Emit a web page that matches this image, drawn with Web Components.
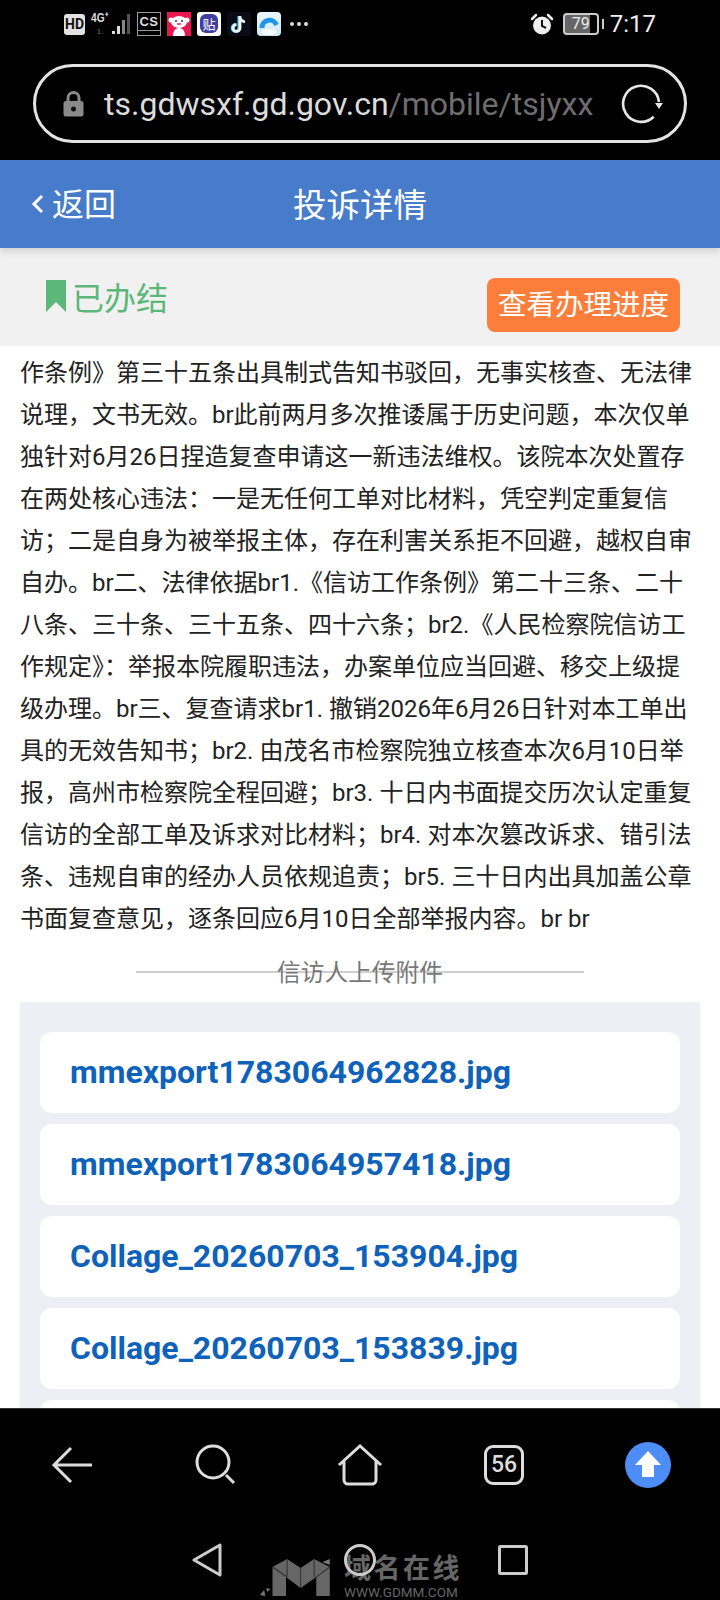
<!DOCTYPE html>
<html lang="zh-CN">
<head>
<meta charset="utf-8">
<title>投诉详情</title>
<style>
    html,body{margin:0;padding:0;background:#000;}
    body{font-family:Roboto,"Noto Sans CJK SC",sans-serif;}
    phone-shell{height:1600px;width:720px;}
</style>
</head>
<body>
<phone-shell>
    <status-bar></status-bar>
    <url-bar></url-bar>
    <app-header></app-header>
    <case-status></case-status>
    <page-scroll>
        <complaint-text>作条例》第三十五条出具制式告知书驳回，无事实核查、无法律说理，文书无效。br此前两月多次推诿属于历史问题，本次仅单独针对6月26日捏造复查申请这一新违法维权。该院本次处置存在两处核心违法：一是无任何工单对比材料，凭空判定重复信访；二是自身为被举报主体，存在利害关系拒不回避，越权自审自办。br二、法律依据br1.《信访工作条例》第二十三条、二十八条、三十条、三十五条、四十六条；br2.《人民检察院信访工作规定》：举报本院履职违法，办案单位应当回避、移交上级提级办理。br三、复查请求br1. 撤销2026年6月26日针对本工单出具的无效告知书；br2. 由茂名市检察院独立核查本次6月10日举报，高州市检察院全程回避；br3. 十日内书面提交历次认定重复信访的全部工单及诉求对比材料；br4. 对本次篡改诉求、错引法条、违规自审的经办人员依规追责；br5. 三十日内出具加盖公章书面复查意见，逐条回应6月10日全部举报内容。br br</complaint-text>
        <attach-divider>信访人上传附件</attach-divider>
        <attach-list>
            <file-card>mmexport1783064962828.jpg</file-card>
            <file-card>mmexport1783064957418.jpg</file-card>
            <file-card>Collage_20260703_153904.jpg</file-card>
            <file-card>Collage_20260703_153839.jpg</file-card>
            <file-card></file-card>
        </attach-list>
    </page-scroll>
    <browser-nav></browser-nav>
    <system-nav></system-nav>
</phone-shell>

<script>
// base: each element only gives getStyles() and getMarkup()
class ShadowBase extends HTMLElement{
    constructor(){
        super();
        this.attachShadow({mode:"open"});
    }
    getTemplate(){
        const template = document.createElement('template');
        template.innerHTML=`<style>${this.getStyles()}</style>${this.getMarkup()}`;
        return template;
    }
    getMarkup(){ return '<slot></slot>'; }
    connectedCallback(){
        this.shadowRoot.appendChild(this.getTemplate().content.cloneNode(true));
    }
}

class PhoneShell extends ShadowBase{
    getStyles(){ return `
        :host{display:flex;flex-direction:column;position:relative;overflow:hidden;background:#000;}
    `; }
}

class StatusBar extends ShadowBase{
    getStyles(){ return `
        :host{display:flex;align-items:center;height:48px;flex:none;box-sizing:border-box;padding:0 64px 0 64px;color:#e8e8e8;font-family:Roboto,sans-serif;}
        .hd{width:21px;height:21px;border-radius:3px;background:#e2e2e2;color:#111;font:700 14px/21px Roboto,sans-serif;text-align:center;}
        .sig{position:relative;width:40px;height:24px;margin-left:6px;}
        .sig b{position:absolute;left:0;top:-1px;font:700 13px/14px "Liberation Sans",sans-serif;color:#ddd;transform:scaleX(.78);transform-origin:left;}
        .sig i{position:absolute;left:6px;top:15px;font:700 7px/9px "Liberation Sans",sans-serif;color:#555;font-style:normal;}
        .sig svg{position:absolute;left:0;top:0;}
        .cs{width:22px;height:22px;margin-left:6px;border:1px solid #9a9a9a;font:700 13px/17px "Liberation Sans",sans-serif;letter-spacing:.5px;text-align:center;color:#ddd;position:relative;}
        .cs::after{content:"";position:absolute;left:0;right:0;top:17px;border-top:1px solid #9a9a9a;}
        .app{width:24px;height:24px;margin-left:6px;display:block;}
        .tie{position:relative;background:#fff;border-radius:3px;}
        .tie span{position:absolute;left:3px;top:2px;width:18px;height:19px;border-radius:6px;background:#3f3fa6;color:#fff;font:400 13px/19px "Noto Sans CJK SC",sans-serif;text-align:center;}
        .dots{margin-left:9px;display:flex;gap:3px;}
        .dots i{width:4px;height:4px;border-radius:50%;background:#ddd;}
        .right{margin-left:auto;display:flex;align-items:center;}
        .batt{position:relative;width:32px;height:18px;margin-left:9px;border:2px solid #ccc;border-radius:4px;background:linear-gradient(90deg,#666 0 78%,transparent 78%);font:400 16px/18px Roboto,sans-serif;text-align:center;color:#eee;}
        .batt::after{content:"";position:absolute;right:-7px;top:4px;width:2px;height:10px;background:#ccc;}
        .time{margin-left:11px;font:400 24px/30px Roboto,sans-serif;color:#eee;}
    `; }
    getMarkup(){ return `
        <div class="hd">HD</div>
        <div class="sig">
            <b>4G⁺</b><i>1↓</i>
            <svg width="40" height="24" fill="#ddd"><rect x="21" y="19" width="3" height="3"/><rect x="26" y="14" width="3" height="8"/><rect x="31" y="8" width="3" height="14" fill="#888"/><rect x="36" y="2" width="3" height="20" fill="#555"/></svg>
        </div>
        <div class="cs">CS</div>
        <svg class="app" viewBox="0 0 24 24"><rect width="24" height="24" fill="#e8174f"/><ellipse cx="12" cy="10" rx="8" ry="6" fill="#fff"/><circle cx="4" cy="8" r="2.5" fill="#fff"/><circle cx="20" cy="8" r="2.5" fill="#fff"/><path d="M6 24c0-6 3-8 6-8s6 2 6 8z" fill="#fff"/><circle cx="9" cy="9" r="1" fill="#333"/><circle cx="15" cy="9" r="1" fill="#333"/><path d="M10 12h4" stroke="#e8174f" stroke-width="1.4"/></svg>
        <div class="app tie"><span>贴</span></div>
        <svg class="app" viewBox="0 0 24 24"><rect width="24" height="24" rx="3" fill="#0b0b17"/><path d="M13 4v12a3.4 3.4 0 1 1-3.4-3.4" fill="none" stroke="#3fe0e6" stroke-width="3" transform="translate(-1 0)"/><path d="M13 4v12a3.4 3.4 0 1 1-3.4-3.4M13 5c.5 3 2.500 4.500 5 5" fill="none" stroke="#f2f2f2" stroke-width="2.800"/></svg>
        <svg class="app" viewBox="0 0 24 24"><defs><linearGradient id="g" x1="0" y1="0" x2="0" y2="1"><stop offset="0" stop-color="#eaf6ff"/><stop offset="1" stop-color="#cfe6f5"/></linearGradient></defs><rect width="24" height="24" rx="4" fill="url(#g)"/><path d="M5 16a7.500 7.500 0 0 1 14.500-3" fill="none" stroke="#1c96ea" stroke-width="5"/><ellipse cx="12" cy="20" rx="8" ry="3" fill="#fff" opacity=".8"/></svg>
        <div class="dots"><i></i><i></i><i></i></div>
        <div class="right">
            <svg width="24" height="24" viewBox="0 0 24 24"><circle cx="12" cy="13.500" r="9" fill="#eee"/><path d="M12 8v6l4 2" fill="none" stroke="#111" stroke-width="2"/><path d="M2 7l4-4M22 7l-4-4" stroke="#eee" stroke-width="2.500" stroke-linecap="round"/></svg>
            <div class="batt">79</div>
            <div class="time">7:17</div>
        </div>
    `; }
}

class UrlBar extends ShadowBase{
    getStyles(){ return `
        :host{display:block;flex:none;padding:16px 33px 17px;}
        .pill{height:73px;border:3px solid #e3e3e3;border-radius:40px;display:flex;align-items:center;padding:0 20px 0 27px;}
        svg.lock{flex:none;}
        .addr{margin-left:20px;font:400 32px/40px Roboto,sans-serif;color:#dcdcdc;white-space:nowrap;flex:1;}
        .addr span{color:#6e6e6e;}
    `; }
    getMarkup(){ return `
        <div class="pill">
            <svg class="lock" width="21" height="26" viewBox="0 0 21 26"><path d="M5 11V7a5.500 5.500 0 0 1 11 0v4" fill="none" stroke="#8a8a8a" stroke-width="3"/><rect x="0.500" y="10" width="20" height="15.500" rx="2.500" fill="#8a8a8a"/><circle cx="10.500" cy="18" r="2.500" fill="#111"/></svg>
            <div class="addr">ts.gdwsxf.gd.gov.cn<span>/mobile/tsjyxx</span></div>
            <svg width="44" height="42" viewBox="0 0 44 42" fill="none"><path d="M39 19A18 18 0 1 0 33.700 33.700" stroke="#e6e6e6" stroke-width="2.600"/><path d="M35 20h8l-4 6z" fill="#e6e6e6"/></svg>
        </div>
    `; }
}

class AppHeader extends ShadowBase{
    getStyles(){ return `
        :host{display:grid;grid-template-columns:1fr auto 1fr;align-items:center;flex:none;height:88px;background:#477cca;color:#fff;font-family:"Noto Sans CJK SC",sans-serif;font-weight:400;box-shadow:0 3px 8px rgba(0,0,0,.15);position:relative;z-index:1;}
        .back{display:flex;align-items:center;padding-left:30px;font-size:32px;gap:8px;margin-top:-4px;}
        .back svg{margin-top:4px;}
        .title{font-size:33.500px;margin-top:-4px;}
    `; }
    getMarkup(){ return `
        <div class="back"><svg width="14" height="24" viewBox="0 0 14 24" fill="none"><path d="M12 4L4 12l8 8" stroke="#fff" stroke-width="3"/></svg><span>返回</span></div>
        <div class="title">投诉详情</div>
        <div></div>
    `; }
}

class CaseStatus extends ShadowBase{
    getStyles(){ return `
        :host{display:flex;align-items:center;justify-content:space-between;flex:none;height:98px;box-sizing:border-box;padding:0 40px 0 46px;background:#f1f1f1;font-family:"Noto Sans CJK SC",sans-serif;font-weight:400;}
        .state{display:flex;align-items:center;color:#5cb87a;font-size:32px;margin-top:-2px;gap:6px;}
        .btn{padding:0 11px;height:54px;line-height:50px;border-radius:8px;background:#fd7e3a;color:#fff;font-size:28.500px;margin-top:15px;}
    `; }
    getMarkup(){ return `
        <div class="state"><svg width="20" height="32" viewBox="0 0 20 32"><path d="M0 0h20v32L10 22 0 32z" fill="#5cb87a"/></svg><span>已办结</span></div>
        <div class="btn">查看办理进度</div>
    `; }
}

class PageScroll extends ShadowBase{
    getStyles(){ return `
        :host{display:block;flex:1;min-height:0;overflow:hidden;background:#fff;}
    `; }
}

class ComplaintText extends ShadowBase{
    getStyles(){ return `
        :host{display:block;padding:6px 23px 0 20px;font:400 24px/42px Roboto,"Noto Sans CJK SC",sans-serif;color:#222;}
    `; }
}

class AttachDivider extends ShadowBase{
    getStyles(){ return `
        :host{display:block;position:relative;width:448px;margin:14px auto 0;height:34px;text-align:center;font:400 23.700px/34px "Noto Sans CJK SC",sans-serif;color:#777;}
        :host::before{content:"";position:absolute;left:0;right:0;top:17px;border-top:2px solid #cfcfcf;}
        span{position:relative;}
    `; }
    getMarkup(){ return '<span><slot></slot></span>'; }
}

class AttachList extends ShadowBase{
    getStyles(){ return `
        :host{display:flex;flex-direction:column;gap:11px;margin:14px 20px 0;padding:30px 20px;background:#eeeff5;}
    `; }
}

class FileCard extends ShadowBase{
    getStyles(){ return `
        :host{display:block;height:81px;box-sizing:border-box;padding:0 30px;border-radius:12px;background:#fff;font:700 32px/81px Roboto,sans-serif;color:#0f62ba;white-space:nowrap;}
    `; }
}

class BrowserNav extends ShadowBase{
    getStyles(){ return `
        :host{display:grid;grid-template-columns:repeat(5,144px);align-items:center;justify-items:center;flex:none;height:112px;box-sizing:border-box;border-top:1px solid #333;background:#000;}
        .tabs{width:40px;height:40px;box-sizing:border-box;border:3px solid #ddd;border-radius:9px;color:#ddd;font:500 23px/34px Roboto,sans-serif;text-align:center;}
    `; }
    getMarkup(){ return `
        <svg width="44" height="40" viewBox="0 0 44 40" fill="none" stroke="#ddd" stroke-width="3"><path d="M42 20H4M21 3L4 20l17 17"/></svg>
        <svg width="44" height="44" viewBox="0 0 44 44" fill="none" stroke="#ddd" stroke-width="3"><circle cx="19" cy="19" r="16"/><path d="M32 32l8 8"/></svg>
        <svg width="44" height="42" viewBox="0 0 44 42" fill="none" stroke="#ddd" stroke-width="3"><path d="M1 21L22 2l21 19M6 17v19a4 4 0 0 0 4 4h24a4 4 0 0 0 4-4V17"/></svg>
        <div class="tabs">56</div>
        <svg width="46" height="46" viewBox="0 0 46 46"><circle cx="23" cy="23" r="23" fill="#4d8df5"/><path d="M23 9L36 23h-7v12H17V23h-7z" fill="#fff"/></svg>
    `; }
}

class SystemNav extends ShadowBase{
    getStyles(){ return `
        :host{display:flex;justify-content:center;align-items:center;flex:none;height:80px;position:relative;background:#000;}
        .cell{width:153px;display:flex;justify-content:center;position:relative;z-index:1;}
        .mark{position:absolute;left:260px;top:33px;display:flex;gap:9px;align-items:flex-end;color:#666;}
        .mark svg{margin-bottom:3px;}
        .words{display:flex;flex-direction:column;width:120px;}
        .cn{font:700 27px/32px Roboto,"Noto Sans CJK SC",sans-serif;letter-spacing:2.500px;white-space:nowrap;}
        .en{font:400 13.500px/16px Roboto,sans-serif;white-space:nowrap;margin-top:-1px;}
    `; }
    getMarkup(){ return `
        <div class="mark">
            <svg width="75" height="38" viewBox="0 0 72 38" preserveAspectRatio="none" fill="#666"><path d="M12 8L26 0l13 9L52 0l15 8v29H54V18L39 29 25 18v19H12z"/><path d="M12 8l14 10M26 0v18M39 9v20M52 0v18M67 8L54 18" stroke="#333" stroke-width="1"/><path d="M0 36l4-5 1 6zM6 29l4 1-3 3zM60 3l7-3 0 6z" fill="#777"/></svg>
            <div class="words"><div class="cn">域名在线</div><div class="en">WWW.GDMM.COM</div></div>
        </div>
        <div class="cell"><svg width="30" height="34" viewBox="0 0 30 34" fill="none" stroke="#ccc" stroke-width="3" stroke-linejoin="round"><path d="M28 2v30L2 17z"/></svg></div>
        <div class="cell"><svg width="32" height="32" viewBox="0 0 32 32" fill="none" stroke="#ccc" stroke-width="3"><circle cx="16" cy="16" r="14.500"/></svg></div>
        <div class="cell"><svg width="30" height="30" viewBox="0 0 30 30" fill="none" stroke="#ccc" stroke-width="3" stroke-linejoin="round"><rect x="1.500" y="1.500" width="27" height="27" rx="1"/></svg></div>
    `; }
}

customElements.define('phone-shell', PhoneShell);
customElements.define('status-bar', StatusBar);
customElements.define('url-bar', UrlBar);
customElements.define('app-header', AppHeader);
customElements.define('case-status', CaseStatus);
customElements.define('page-scroll', PageScroll);
customElements.define('complaint-text', ComplaintText);
customElements.define('attach-divider', AttachDivider);
customElements.define('attach-list', AttachList);
customElements.define('file-card', FileCard);
customElements.define('browser-nav', BrowserNav);
customElements.define('system-nav', SystemNav);
</script>
</body>
</html>
